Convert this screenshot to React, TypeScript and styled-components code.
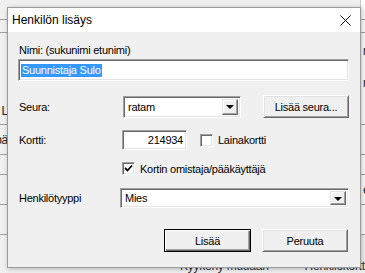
import React from "react";
import styled, { createGlobalStyle } from "styled-components";

const Global = createGlobalStyle`
  html, body { margin: 0; padding: 0; width: 365px; height: 273px; overflow: hidden; background: #f0f0f0; }
  * { box-sizing: border-box; }
`;

const Stage = styled.div`
  position: relative;
  width: 365px;
  height: 273px;
  overflow: hidden;
  font-family: "Liberation Sans", Arial, sans-serif;
  font-size: 11px;
  letter-spacing: -0.25px;
  color: #000;
`;

/* ---------- background application (behind the dialog) ---------- */
const Backdrop = styled.div`
  display: flex;
  flex-direction: column;
  width: 365px;
  height: 273px;
  background: #f0f0f0;
`;

const BackRow = styled.div<{ $h: number; $line?: boolean }>`
  height: ${(p) => p.$h}px;
  display: flex;
  justify-content: space-between;
  align-items: center;
  border-bottom: ${(p) => (p.$line ? "1px solid #a0a0a0" : "none")};
  flex: none;
`;

const BackCell = styled.span`
  width: 8px;
  height: 100%;
  display: flex;
  align-items: center;
  justify-content: flex-end;
  overflow: hidden;
  white-space: nowrap;
  font-size: 12px;
  color: #222;
`;

const RightCell = styled(BackCell)`
  width: 5px;
  justify-content: flex-start;
  padding-left: 2px;
  background: #fcfcfc;
  border-left: 1px solid #c8c8c8;
`;

const BottomRow = styled.div`
  flex: 1;
  display: flex;
  align-items: flex-end;
  padding-left: 180px;
  font-size: 12px;
  color: #333;
  gap: 18px;
  overflow: hidden;
  white-space: nowrap;
`;

const BottomSep = styled.span`
  width: 1px;
  height: 100%;
  background: #808080;
`;

/* ---------- dialog window ---------- */
const Dialog = styled.div`
  position: absolute;
  left: 7px;
  top: 7px;
  width: 354px;
  height: 261px;
  border: 1px solid #9a9a9a;
  background: #f0f0f0;
  box-shadow: 1px 1px 5px rgba(0, 0, 0, 0.25);
  display: flex;
  flex-direction: column;
`;

const TitleBar = styled.div`
  height: 24px;
  flex: none;
  background: #ffffff;
  display: flex;
  align-items: center;
  justify-content: space-between;
  padding-left: 4px;
  font-size: 12px;
  letter-spacing: 0;
`;

const CloseBtn = styled.div`
  width: 30px;
  height: 24px;
  display: flex;
  align-items: center;
  justify-content: center;
`;

const Body = styled.div`
  flex: 1;
  padding: 12px 11px 0 10px;
  display: flex;
  flex-direction: column;
`;

const Label = styled.div`
  line-height: 13px;
  height: 14px;
  padding-left: 1px;
`;

const Sunken = styled.div`
  background: #fff;
  border-style: solid;
  border-width: 1px;
  border-color: #a0a0a0 #ffffff #ffffff #a0a0a0;
  box-shadow: inset 1px 1px 0 #696969, inset -1px -1px 0 #e3e3e3;
  display: flex;
  align-items: center;
`;

const NameInput = styled(Sunken)`
  margin-top: 1px;
  height: 22px;
  padding-left: 2px;
`;

const Selected = styled.span`
  background: #3399ff;
  color: #fff;
  line-height: 13px;
  padding: 0 1px;
`;

const Row = styled.div<{ $top: number; $h: number }>`
  margin-top: ${(p) => p.$top}px;
  height: ${(p) => p.$h}px;
  display: flex;
  align-items: center;
`;

const RowLabel = styled.div<{ $w: number }>`
  width: ${(p) => p.$w}px;
  flex: none;
  padding-left: 1px;
`;

const Combo = styled(Sunken)<{ $w: number; $h: number }>`
  width: ${(p) => p.$w}px;
  height: ${(p) => p.$h}px;
  padding: 2px 2px 2px 4px;
  justify-content: space-between;
`;

const DropBtn = styled.div`
  width: 16px;
  height: 100%;
  background: #f0f0f0;
  border-style: solid;
  border-width: 1px;
  border-color: #e3e3e3 #696969 #696969 #e3e3e3;
  box-shadow: inset -1px -1px 0 #a0a0a0, inset 1px 1px 0 #fff;
  display: flex;
  align-items: center;
  justify-content: center;
`;

const Arrow = styled.span`
  width: 0;
  height: 0;
  border-left: 4px solid transparent;
  border-right: 4px solid transparent;
  border-top: 4px solid #000;
  margin-top: 1px;
`;

const Button = styled.div<{ $w: number; $default?: boolean; $ml?: number }>`
  width: ${(p) => p.$w}px;
  height: 23px;
  flex: none;
  margin-left: ${(p) => p.$ml ?? 0}px;
  background: #f0f0f0;
  display: flex;
  align-items: center;
  justify-content: center;
  border: 1px solid;
  border-color: ${(p) => (p.$default ? "#000" : "#fff #696969 #696969 #fff")};
  box-shadow: ${(p) =>
    p.$default
      ? "inset 1px 1px 0 #fff, inset -1px -1px 0 #696969, inset -2px -2px 0 #a0a0a0"
      : "inset 1px 1px 0 #e3e3e3, inset -1px -1px 0 #a0a0a0"};
`;

const NumInput = styled(Sunken)`
  width: 65px;
  height: 100%;
  justify-content: flex-end;
  padding-right: 3px;
`;

const CheckWrap = styled.label<{ $ml: number }>`
  margin-left: ${(p) => p.$ml}px;
  display: flex;
  align-items: center;
  gap: 5px;
`;

const Box = styled(Sunken)`
  width: 13px;
  height: 13px;
  justify-content: center;
`;

const Footer = styled.div`
  margin-top: 21px;
  display: flex;
  justify-content: flex-end;
  gap: 11px;
  padding-right: 1px;
`;

export default function App() {
  return (
    <>
      <Global />
      <Stage>
        <Backdrop>
          <BackRow $h={20} $line>
            <BackCell />
            <RightCell />
          </BackRow>
          <BackRow $h={13} $line>
            <BackCell />
            <RightCell />
          </BackRow>
          <BackRow $h={36}>
            <BackCell />
            <RightCell>r</RightCell>
          </BackRow>
          <BackRow $h={28}>
            <BackCell />
            <RightCell>n</RightCell>
          </BackRow>
          <BackRow $h={28} $line>
            <BackCell>L</BackCell>
            <RightCell />
          </BackRow>
          <BackRow $h={30} $line>
            <BackCell>pä</BackCell>
            <RightCell />
          </BackRow>
          <BackRow $h={20} $line>
            <BackCell />
            <RightCell />
          </BackRow>
          <BackRow $h={30} $line>
            <BackCell />
            <RightCell>e</RightCell>
          </BackRow>
          <BackRow $h={30} $line>
            <BackCell />
            <RightCell />
          </BackRow>
          <BottomRow>
            <span>Kyykeny muuaan</span>
            <BottomSep />
            <span>Henkilökortti ä</span>
          </BottomRow>
        </Backdrop>

        <Dialog>
          <TitleBar>
            <span>Henkilön lisäys</span>
            <CloseBtn>
              <svg width="11" height="11" viewBox="0 0 11 11">
                <path d="M0.5 0.5 L10.5 10.5 M10.5 0.5 L0.5 10.5" stroke="#111" strokeWidth="1" />
              </svg>
            </CloseBtn>
          </TitleBar>
          <Body>
            <Label>Nimi: (sukunimi etunimi)</Label>
            <NameInput>
              <Selected>Suunnistaja Sulo</Selected>
            </NameInput>

            <Row $top={14} $h={23}>
              <RowLabel $w={105}>Seura:</RowLabel>
              <Combo $w={118} $h={22}>
                <span>ratam</span>
                <DropBtn>
                  <Arrow />
                </DropBtn>
              </Combo>
              <Button $w={86} $ml={22}>
                Lisää seura...
              </Button>
            </Row>

            <Row $top={12} $h={20}>
              <RowLabel $w={104}>Kortti:</RowLabel>
              <NumInput>214934</NumInput>
              <CheckWrap $ml={13}>
                <Box />
                <span>Lainakortti</span>
              </CheckWrap>
            </Row>

            <Row $top={10} $h={17}>
              <CheckWrap $ml={104}>
                <Box>
                  <svg width="9" height="9" viewBox="0 0 9 9">
                    <path d="M1 4 L3.5 6.5 L8 1.5" stroke="#000" strokeWidth="1.8" fill="none" />
                  </svg>
                </Box>
                <span>Kortin omistaja/pääkäyttäjä</span>
              </CheckWrap>
            </Row>

            <Row $top={11} $h={20}>
              <RowLabel $w={102}>Henkilötyyppi</RowLabel>
              <Combo $w={229} $h={20}>
                <span>Mies</span>
                <DropBtn>
                  <Arrow />
                </DropBtn>
              </Combo>
            </Row>

            <Footer>
              <Button $w={87} $default>
                Lisää
              </Button>
              <Button $w={86}>Peruuta</Button>
            </Footer>
          </Body>
        </Dialog>
      </Stage>
    </>
  );
}
